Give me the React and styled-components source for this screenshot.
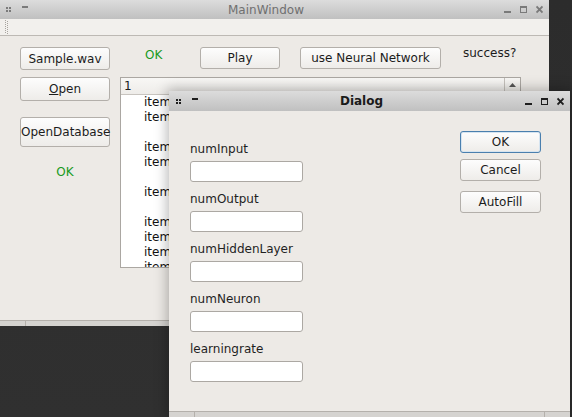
import React from "react";
import styled, { createGlobalStyle } from "styled-components";

const GlobalStyle = createGlobalStyle`
  html, body {
    margin: 0;
    padding: 0;
    background: #2f2f2f;
  }
  body {
    font-family: "DejaVu Sans", "Liberation Sans", sans-serif;
    font-size: 12px;
    color: #1c1c1c;
  }
`;

const Desktop = styled.div`
  position: relative;
  width: 572px;
  height: 417px;
  overflow: hidden;
  background: linear-gradient(#2c2c2c, #303030);
`;

const Window = styled.div`
  position: absolute;
  left: ${(p) => p.$x}px;
  top: ${(p) => p.$y}px;
  width: ${(p) => p.$w}px;
  height: ${(p) => p.$h}px;
  display: flex;
  flex-direction: column;
  background: #edeae6;
  box-shadow: ${(p) => (p.$active ? "0 0 12px 2px rgba(0,0,0,0.28)" : "none")};
`;

const TitleBar = styled.div`
  flex: none;
  height: ${(p) => p.$h}px;
  display: flex;
  align-items: center;
  padding: 0 6px 0 ${(p) => p.$pl}px;
  background: linear-gradient(#dcdcdc, #c0c0c0);
  color: ${(p) => (p.$active ? "#1a1a1a" : "#707070")};
  font-weight: ${(p) => (p.$active ? "bold" : "normal")};
`;

const TitleText = styled.div`
  flex: 1;
  text-align: center;
`;

const IconGroup = styled.div`
  display: flex;
  align-items: center;
  gap: ${(p) => p.$gap}px;
`;

const ToolBar = styled.div`
  flex: none;
  height: 16px;
  display: flex;
  align-items: center;
  padding-left: 5px;
  background: #f2f0ed;
  border-bottom: 1px solid #bdb9b4;
`;

const Central = styled.div`
  flex: 1;
  display: flex;
  flex-direction: column;
  gap: 7px;
  padding: 11px 0 0 20px;
`;

const Row = styled.div`
  display: flex;
  align-items: flex-start;
`;

const Column = styled.div`
  display: flex;
  flex-direction: column;
  width: ${(p) => p.$w}px;
`;

const Button = styled.button`
  box-sizing: border-box;
  width: ${(p) => p.$w}px;
  height: ${(p) => p.$h || 22}px;
  margin: ${(p) => p.$mt || 0}px 0 0 ${(p) => p.$ml || 0}px;
  padding: 0;
  font: inherit;
  color: #1c1c1c;
  background: linear-gradient(#fdfdfd, #eeece9);
  border: 1px solid ${(p) => (p.$focus ? "#4a7fae" : "#b3afaa")};
  border-radius: 3px;
  box-shadow: ${(p) => (p.$focus ? "inset 0 0 0 1px #d6e4f0" : "none")};
  flex: none;
`;

const Mnemonic = styled.span`
  text-decoration: underline;
`;

const Label = styled.div`
  flex: none;
  width: ${(p) => (p.$w ? `${p.$w}px` : "auto")};
  margin: ${(p) => p.$mt || 0}px 0 0 ${(p) => p.$ml || 0}px;
  line-height: 16px;
  text-align: ${(p) => (p.$center ? "center" : "left")};
  color: ${(p) => (p.$ok ? "#199a1c" : "#1c1c1c")};
`;

const Tree = styled.div`
  box-sizing: border-box;
  width: 401px;
  height: 191px;
  margin-left: 10px;
  display: flex;
  border: 1px solid #aba7a2;
  background: #fff;
  overflow: hidden;
`;

const TreeMain = styled.div`
  flex: 1;
  display: flex;
  flex-direction: column;
`;

const TreeHeader = styled.div`
  box-sizing: border-box;
  height: 17px;
  line-height: 16px;
  padding-left: 3px;
  background: linear-gradient(#f8f7f5, #eeece9);
  border-bottom: 1px solid #c8c4bf;
`;

const TreeRow = styled.div`
  flex: none;
  height: 15px;
  line-height: 15px;
  padding-left: 23px;
  color: #111;
`;

const ScrollBar = styled.div`
  width: 15px;
  border-left: 1px solid #c4c0bb;
  background: #ebe8e4;
`;

const ScrollButton = styled.div`
  height: 14px;
  display: flex;
  align-items: center;
  justify-content: center;
  background: linear-gradient(#f8f7f5, #eceae6);
  border-bottom: 1px solid #c4c0bb;
`;

const StatusBar = styled.div`
  flex: none;
  height: 5px;
  display: flex;
  border-top: 1px solid #b4b0ab;
  background: #d5d3d0;
`;

const StatusCell = styled.div`
  flex: ${(p) => (p.$w ? "none" : 1)};
  width: ${(p) => (p.$w ? `${p.$w}px` : "auto")};
  border-right: ${(p) => (p.$divider ? "1px solid #b4b0ab" : "none")};
`;

const DialogBody = styled.div`
  flex: 1;
  display: flex;
  justify-content: space-between;
  padding: 20px 30px 0 21px;
`;

const Form = styled.div`
  display: flex;
  flex-direction: column;
  margin-top: 10px;
`;

const Field = styled.div`
  display: flex;
  flex-direction: column;
  gap: 4px;
  margin-bottom: 9px;
`;

const FieldLabel = styled.label`
  line-height: 16px;
  color: #1f1f1f;
`;

const TextInput = styled.input`
  box-sizing: border-box;
  width: 113px;
  height: 21px;
  margin: 0;
  border: 1px solid #aca8a3;
  border-radius: 3px;
  background: #fff;
`;

const Grip = ({ c }) => (
  <svg width="5" height="9" viewBox="0 0 5 9">
    <rect x="0" y="2" width="2" height="2" fill={c} />
    <rect x="3" y="2" width="2" height="2" fill={c} />
    <rect x="0" y="5" width="2" height="2" fill={c} />
    <rect x="3" y="5" width="2" height="2" fill={c} />
  </svg>
);

const Dash = ({ c }) => (
  <svg width="6" height="9" viewBox="0 0 6 9">
    <rect x="0" y="1" width="6" height="2" fill={c} />
  </svg>
);

const Minimize = ({ c }) => (
  <svg width="7" height="9" viewBox="0 0 7 9">
    <rect x="0" y="6" width="7" height="2" fill={c} />
  </svg>
);

const Maximize = ({ c }) => (
  <svg width="7" height="9" viewBox="0 0 7 9">
    <rect x="0" y="1" width="7" height="2" fill={c} />
    <rect x="0" y="1" width="1" height="7" fill={c} />
    <rect x="6" y="1" width="1" height="7" fill={c} />
    <rect x="0" y="7" width="7" height="1" fill={c} />
  </svg>
);

const Close = ({ c }) => (
  <svg width="7" height="9" viewBox="0 0 7 9">
    <path d="M0.5 1.5 L6.5 7.5 M6.5 1.5 L0.5 7.5" stroke={c} strokeWidth="1.8" />
  </svg>
);

const Handle = () => (
  <svg width="4" height="14" viewBox="0 0 4 14">
    {[0, 2, 4, 6, 8, 10, 12].map((y) => (
      <g key={y}>
        <rect x="0" y={y} width="1" height="1" fill="#a8a49f" />
        <rect x="2" y={y + 1} width="1" height="1" fill="#a8a49f" />
      </g>
    ))}
  </svg>
);

const Titlebar = ({ title, active, h, pl }) => {
  const c = active ? "#1e1e1e" : "#7a7a7a";
  return (
    <TitleBar $active={active} $h={h} $pl={pl}>
      <IconGroup $gap={11}>
        <Grip c={c} />
        <Dash c={c} />
      </IconGroup>
      <TitleText>{title}</TitleText>
      <IconGroup $gap={9}>
        <Minimize c={c} />
        <Maximize c={c} />
        <Close c={c} />
      </IconGroup>
    </TitleBar>
  );
};

const rows = ["item 1", "item 2", "", "item 3", "item 4", "", "item 5", "", "item 6", "item 7", "item 8", "item 9"];
const fields = ["numInput", "numOutput", "numHiddenLayer", "numNeuron", "learningrate"];

export default function App() {
  return (
    <Desktop>
      <GlobalStyle />
      <Window $x={0} $y={0} $w={549} $h={326}>
        <Titlebar title="MainWindow" h={19} pl={6} />
        <ToolBar>
          <Handle />
        </ToolBar>
        <Central>
          <Row>
            <Button $w={90} $h={23}>Sample.wav</Button>
            <Label $ok $ml={35} $w={55}>OK</Label>
            <Button $w={80}>Play</Button>
            <Button $w={141} $ml={20}>use Neural Network</Button>
            <Label $ml={22} $mt={-2}>success?</Label>
          </Row>
          <Row>
            <Column $w={90}>
              <Button $w={90} $h={24}>
                <Mnemonic>O</Mnemonic>pen
              </Button>
              <Button $w={90} $h={30} $mt={16}>OpenDatabase</Button>
              <Label $ok $center $mt={17}>OK</Label>
            </Column>
            <Tree>
              <TreeMain>
                <TreeHeader>1</TreeHeader>
                {rows.map((r, i) => (
                  <TreeRow key={i}>{r}</TreeRow>
                ))}
              </TreeMain>
              <ScrollBar>
                <ScrollButton>
                  <svg width="7" height="4" viewBox="0 0 7 4">
                    <path d="M3.5 0 L7 4 L0 4 Z" fill="#555" />
                  </svg>
                </ScrollButton>
              </ScrollBar>
            </Tree>
          </Row>
        </Central>
        <StatusBar>
          <StatusCell $w={25} $divider />
          <StatusCell />
        </StatusBar>
      </Window>

      <Window $x={169} $y={91} $w={401} $h={326} $active>
        <Titlebar title="Dialog" active h={20} pl={7} />
        <DialogBody>
          <Form>
            {fields.map((f) => (
              <Field key={f}>
                <FieldLabel>{f}</FieldLabel>
                <TextInput />
              </Field>
            ))}
          </Form>
          <Column $w={80}>
            <Button $w={81} $focus>OK</Button>
            <Button $w={81} $mt={6}>Cancel</Button>
            <Button $w={81} $mt={10}>AutoFill</Button>
          </Column>
        </DialogBody>
        <StatusBar>
          <StatusCell $w={25} $divider />
          <StatusCell $divider />
          <StatusCell $w={25} />
        </StatusBar>
      </Window>
    </Desktop>
  );
}
